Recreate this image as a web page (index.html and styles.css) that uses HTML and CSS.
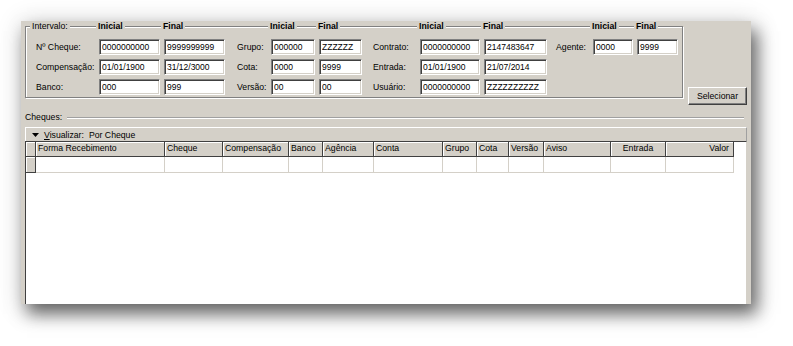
FILE: index.html
```html
<!DOCTYPE html>
<html lang="pt">
<head>
<meta charset="utf-8">
<title>Cheques</title>
<link rel="stylesheet" href="styles.css">
</head>
<body>
<div class="stage">
<div class="window">
  <div class="top">
    <div class="group">
      <div class="grid">
        <span class="hd hd-first">Intervalo:</span>
        <span class="hd hd-b">Inicial</span>
        <span class="hd hd-b">Final</span>
        <span></span>
        <span class="hd hd-b">Inicial</span>
        <span class="hd hd-b">Final</span>
        <span></span>
        <span class="hd hd-b">Inicial</span>
        <span class="hd hd-b">Final</span>
        <span></span>
        <span class="hd hd-b">Inicial</span>
        <span class="hd hd-b">Final</span>

        <label class="lbl">Nº Cheque:</label>
        <input class="fld" value="0000000000">
        <input class="fld" value="9999999999">
        <label class="lbl l2">Grupo:</label>
        <input class="fld" value="000000">
        <input class="fld" value="ZZZZZZ">
        <label class="lbl l3">Contrato:</label>
        <input class="fld" value="0000000000">
        <input class="fld" value="2147483647">
        <label class="lbl l4">Agente:</label>
        <input class="fld" value="0000">
        <input class="fld" value="9999">

        <label class="lbl">Compensação:</label>
        <input class="fld" value="01/01/1900">
        <input class="fld" value="31/12/3000">
        <label class="lbl l2">Cota:</label>
        <input class="fld" value="0000">
        <input class="fld" value="9999">
        <label class="lbl l3">Entrada:</label>
        <input class="fld" value="01/01/1900">
        <input class="fld" value="21/07/2014">
        <span></span><span></span><span></span>

        <label class="lbl">Banco:</label>
        <input class="fld" value="000">
        <input class="fld" value="999">
        <label class="lbl l2">Versão:</label>
        <input class="fld" value="00">
        <input class="fld" value="00">
        <label class="lbl l3">Usuário:</label>
        <input class="fld" value="0000000000">
        <input class="fld" value="ZZZZZZZZZZ">
      </div>
    </div>
    <button class="btn" type="button">Selecionar</button>
  </div>

  <div class="section">
    <span class="section-title">Cheques:</span>
    <span class="etched"></span>
  </div>

  <div class="viewbar">
    <svg class="tri" width="7" height="4" viewBox="0 0 7 4"><path d="M0 0H7L3.5 4Z" fill="#000"/></svg>
    <span class="view-lbl"><u>V</u>isualizar:</span>
    <span class="view-val">Por Cheque</span>
  </div>

  <div class="table">
    <div class="row head">
      <div class="c rh"></div>
      <div class="c">Forma Recebimento</div>
      <div class="c">Cheque</div>
      <div class="c">Compensação</div>
      <div class="c">Banco</div>
      <div class="c">Agência</div>
      <div class="c">Conta</div>
      <div class="c">Grupo</div>
      <div class="c">Cota</div>
      <div class="c">Versão</div>
      <div class="c">Aviso</div>
      <div class="c center">Entrada</div>
      <div class="c right">Valor</div>
    </div>
    <div class="row data">
      <div class="c rh"></div>
      <div class="c"></div><div class="c"></div><div class="c"></div><div class="c"></div>
      <div class="c"></div><div class="c"></div><div class="c"></div><div class="c"></div>
      <div class="c"></div><div class="c"></div><div class="c"></div><div class="c"></div>
    </div>
  </div>
</div>
</div>
</body>
</html>
```

FILE: styles.css
```css
* { box-sizing: border-box; }

html, body {
  margin: 0;
  padding: 0;
  background: #fff;
}

body {
  font-family: "Liberation Sans", Arial, sans-serif;
  font-size: 8.7px;
  color: #000;
}

.stage {
  width: 793px;
  height: 346px;
  padding: 21px 0 0 21px;
  overflow: hidden;
}

.window {
  position: relative;
  width: 730px;
  height: 283px;
  background: #d4d0c8;
  padding: 0 4px 0 4px;
  display: flex;
  flex-direction: column;
  box-shadow: 6px 10px 16px 0 rgba(0, 0, 0, 0.55), 2px 3px 24px 2px rgba(0, 0, 0, 0.16);
}

/* ---------- top filter area ---------- */
.top {
  display: flex;
  align-items: flex-end;
  height: 84px;
}

.group {
  align-self: flex-start;
  margin-top: 5px;
  width: 658px;
  height: 72px;
  border: 1px solid #808080;
  box-shadow: inset 1px 1px 0 #fff, 1px 1px 0 #fff;
  padding: 0 4px 0 10px;
}

.grid {
  margin-top: -6px;
  display: grid;
  grid-template-columns: 59px 61px 61px 38px 44px 43px 50px 60px 63px 38px 40px 41px;
  grid-template-rows: 14px 16px 16px 16px;
  column-gap: 4px;
  row-gap: 4px;
}

.hd {
  align-self: start;
  justify-self: start;
  line-height: 11px;
  height: 11px;
  background: #d4d0c8;
  padding: 0 2px;
  margin-left: -3px;
  white-space: nowrap;
}

.hd-first { margin-left: -6px; }
.hd-b { font-weight: bold; }

.lbl {
  align-self: center;
  white-space: nowrap;
  line-height: 11px;
}
.l2 { padding-left: 8px; }
.l3 { padding-left: 7px; }
.l4 { padding-left: 5px; }

.fld {
  width: 100%;
  height: 16px;
  margin: 0;
  padding: 0 1px 0 2px;
  font: inherit;
  font-size: 8.5px;
  color: #000;
  background: #fff;
  border: 1px solid;
  border-color: #808080 #fff #fff #808080;
  box-shadow: inset 1px 1px 0 #404040, inset -1px -1px 0 #d4d0c8;
  outline: none;
}

.btn {
  margin: 0 0 0 5px;
  width: 59px;
  height: 18px;
  padding: 0;
  font: inherit;
  color: #000;
  background: #d4d0c8;
  border: 1px solid;
  border-color: #fff #404040 #404040 #fff;
  box-shadow: inset -1px -1px 0 #808080;
}

/* ---------- section ---------- */
.section {
  margin-top: 7px;
  height: 11px;
  display: flex;
  align-items: center;
}

.section-title {
  line-height: 11px;
  white-space: nowrap;
}

.etched {
  flex: 1;
  margin-left: 5px;
  margin-right: 3px;
  height: 2px;
  border-top: 1px solid #a0a0a0;
  border-bottom: 1px solid #fff;
}

.viewbar {
  margin-top: 4px;
  height: 14px;
  display: flex;
  align-items: center;
  background: #d4d0c8;
  border-top: 1px solid #fff;
  border-left: 1px solid #fff;
  border-right: 1px solid #a0a0a0;
  padding-left: 6px;
}

.tri { display: block; margin-right: 5px; }
.view-val { margin-left: 5px; }

/* ---------- table ---------- */
.table {
  flex: 1;
  background: #fff;
  border-top: 1px solid #404040;
  border-left: 1px solid #404040;
  border-right: 1px solid #d4d0c8;
}

.row {
  display: grid;
  grid-template-columns: 10px 129px 58px 66px 34px 51px 69px 34px 32px 35px 67px 55px 68px;
}

.head .c {
  height: 15px;
  line-height: 13px;
  background: #d4d0c8;
  border-right: 1px solid #404040;
  border-bottom: 1px solid #404040;
  box-shadow: inset 1px 1px 0 #fff;
  padding-left: 2px;
  white-space: nowrap;
  overflow: hidden;
}

.data .c {
  height: 16px;
  border-right: 1px solid #d4d0c8;
  border-bottom: 1px solid #d4d0c8;
}

.data .rh {
  background: #d4d0c8;
  border-right: 1px solid #404040;
  border-bottom: 1px solid #404040;
  box-shadow: inset 1px 1px 0 #fff;
}

.head .center { text-align: center; padding-left: 0; }
.head .right { text-align: right; padding-right: 4px; }
```
